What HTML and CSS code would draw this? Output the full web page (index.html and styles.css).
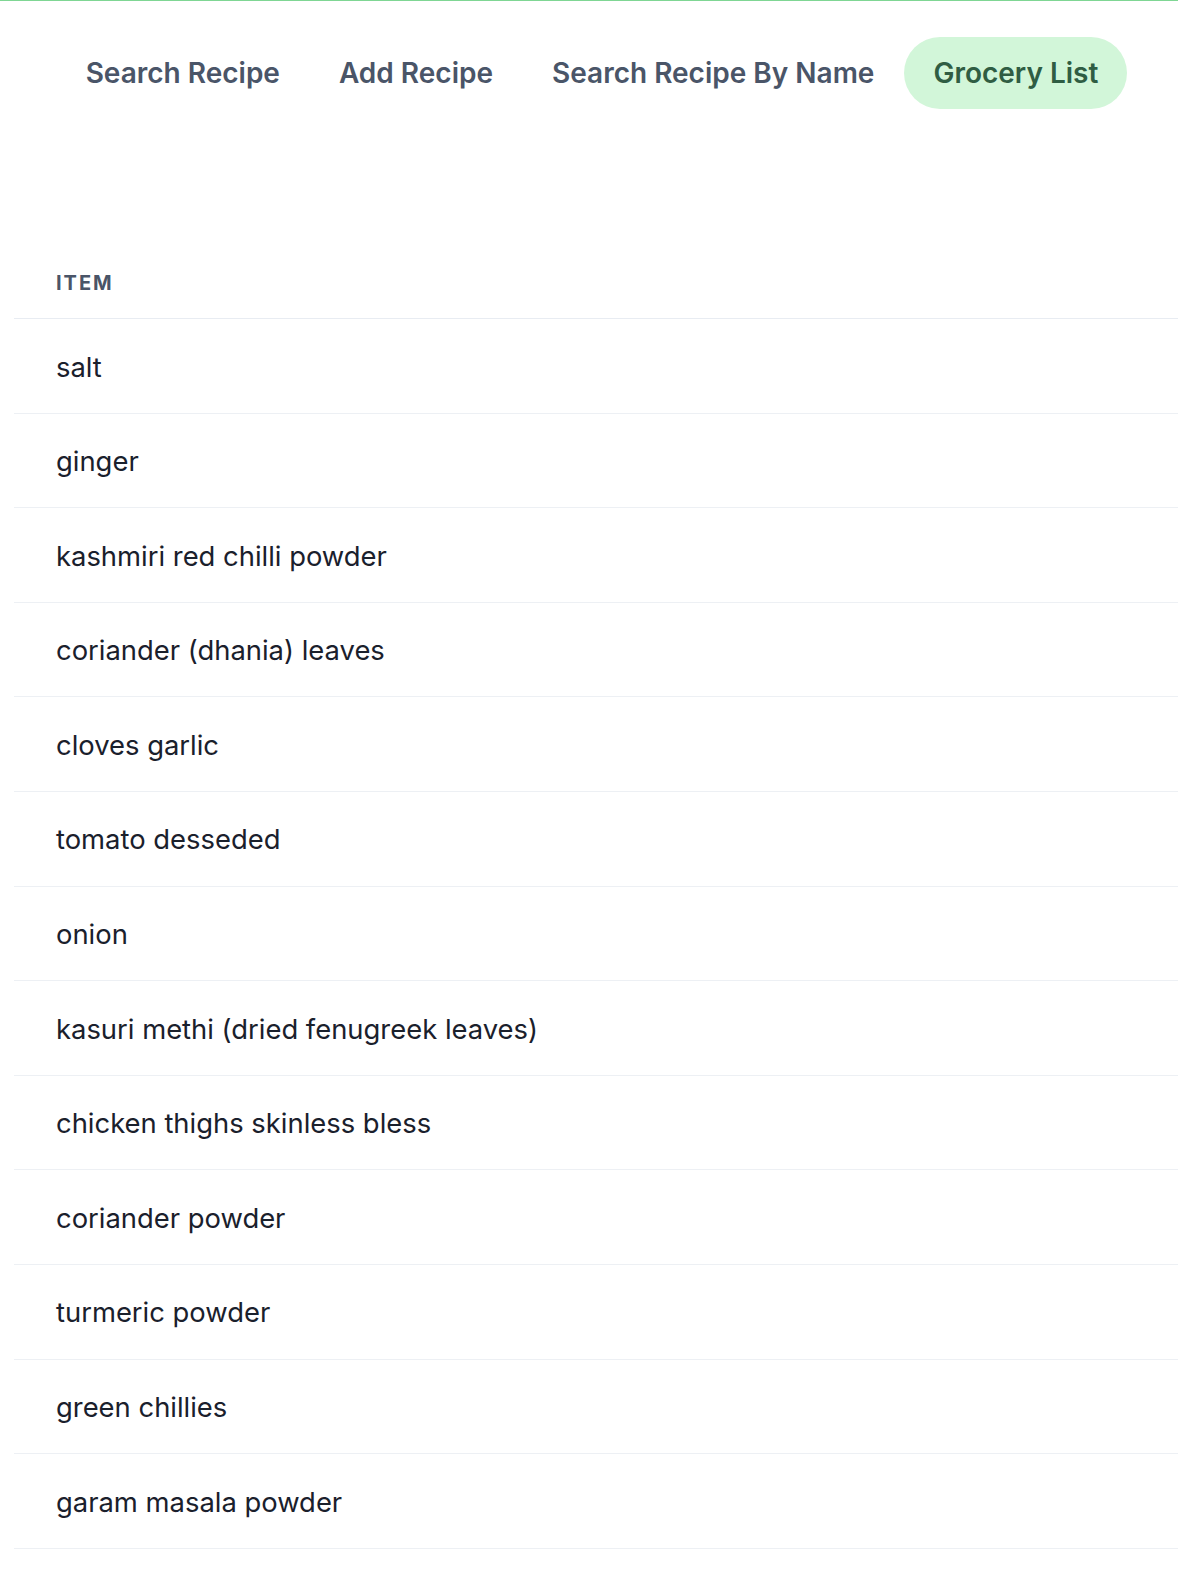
FILE: index.html
```html
<!DOCTYPE html>
<html lang="en">
<head>
<meta charset="utf-8">
<title>Grocery List</title>
<link rel="stylesheet" href="styles.css">
</head>
<body>
<div class="topline"></div>
<nav class="nav">
  <a class="nav-item">Search Recipe</a>
  <a class="nav-item">Add Recipe</a>
  <a class="nav-item">Search Recipe By Name</a>
  <a class="nav-item active">Grocery List</a>
</nav>
<main class="content">
  <table class="grocery">
    <thead>
      <tr><th>Item</th></tr>
    </thead>
    <tbody>
      <tr><td>salt</td></tr>
      <tr><td>ginger</td></tr>
      <tr><td>kashmiri red chilli powder</td></tr>
      <tr><td>coriander (dhania) leaves</td></tr>
      <tr><td>cloves garlic</td></tr>
      <tr><td>tomato desseded</td></tr>
      <tr><td>onion</td></tr>
      <tr><td>kasuri methi (dried fenugreek leaves)</td></tr>
      <tr><td>chicken thighs skinless bless</td></tr>
      <tr><td>coriander powder</td></tr>
      <tr><td>turmeric powder</td></tr>
      <tr><td>green chillies</td></tr>
      <tr><td>garam masala powder</td></tr>
    </tbody>
  </table>
</main>
</body>
</html>
```
FILE: styles.css
```css
* { box-sizing: border-box; }
html, body {
  margin: 0;
  padding: 0;
  background: #ffffff;
  font-family: Inter, "Noto Sans", "Liberation Sans", sans-serif;
}
.topline {
  height: 1px;
  background: #7fd694;
}
.nav {
  display: flex;
  justify-content: center;
  align-items: center;
  gap: 1px;
  padding-top: 36px;
  padding-left: 6px;
}
.nav-item {
  display: block;
  padding: 15px 29px;
  font-size: 28px;
  line-height: 42px;
  font-weight: 600;
  color: #4a5568;
  border-radius: 36px;
  text-decoration: none;
}
.nav-item.active {
  background: #d2f6d9;
  color: #2f5d43;
}
.content {
  padding-left: 14px;
  padding-top: 139px;
}
.grocery {
  width: 100%;
  border-collapse: collapse;
}
.grocery th {
  text-align: left;
  padding: 21px 42px;
  font-size: 20px;
  line-height: 28px;
  font-weight: 700;
  letter-spacing: 0.1em;
  text-transform: uppercase;
  color: #4a5568;
  border-bottom: 1px solid #e8ecf2;
}
.grocery td {
  padding: 30.5px 42px 28.1px;
  font-size: 27.4px;
  line-height: 35px;
  color: #1a202c;
  border-bottom: 1px solid #edf0f4;
}
```
